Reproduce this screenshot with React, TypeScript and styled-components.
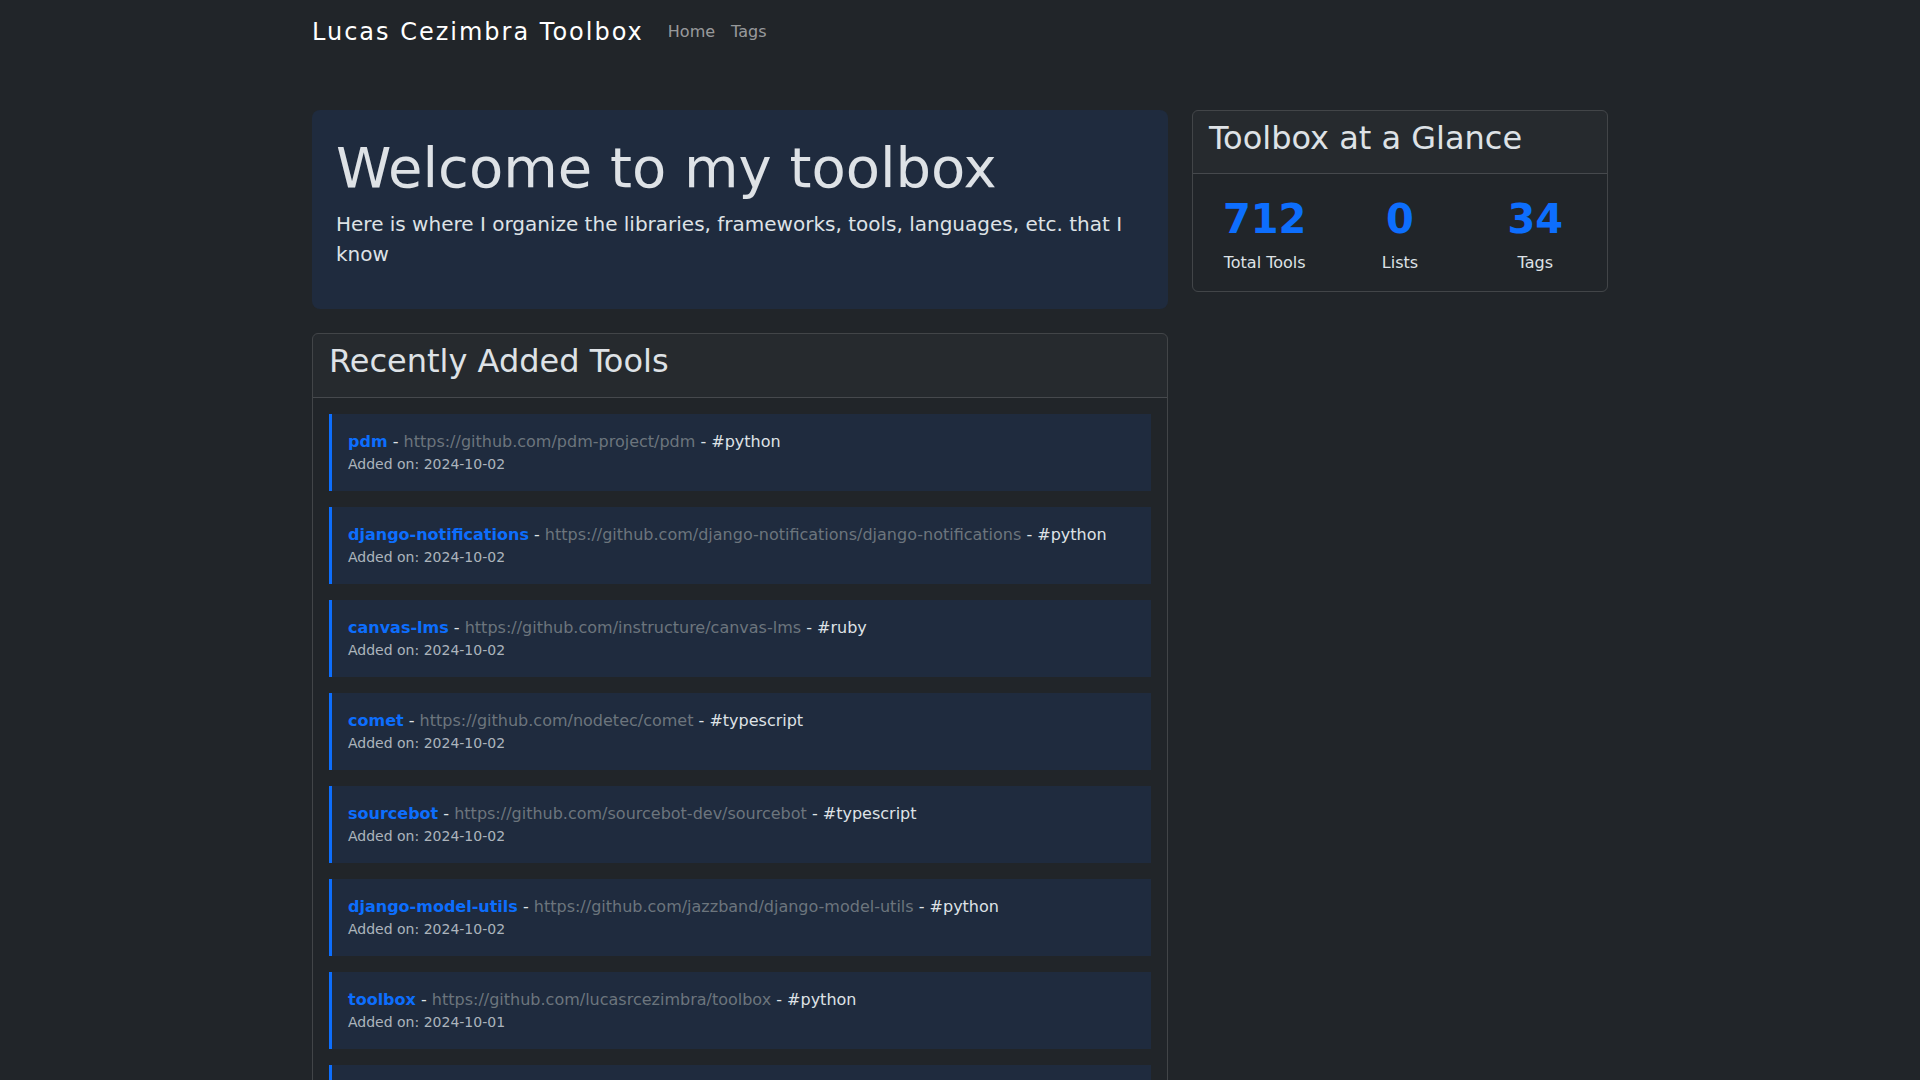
import React from "react";
import styled, { createGlobalStyle } from "styled-components";

const GlobalStyle = createGlobalStyle`
  html, body {
    margin: 0;
    padding: 0;
    background: #212529;
    color: #dee2e6;
    font-family: "DejaVu Sans", sans-serif;
    font-size: 16px;
    line-height: 1.5;
  }
  * { box-sizing: border-box; }
`;

const Container = styled.div`
  max-width: 1320px;
  margin: 0 auto;
  padding: 0 12px;
`;

const Navbar = styled.nav`
  padding: 9px 0 7px;
`;

const NavInner = styled(Container)`
  display: flex;
  align-items: center;
`;

const Brand = styled.a`
  color: #fff;
  font-size: 24px;
  line-height: 36px;
  letter-spacing: 2px;
  padding: 5px 0;
  margin-right: 16px;
  text-decoration: none;
`;

const NavLinks = styled.div`
  display: flex;
`;

const NavLink = styled.a`
  color: rgba(255, 255, 255, 0.55);
  padding: 8px;
  text-decoration: none;
  font-size: 16px;
`;

const Main = styled(Container)`
  margin-top: 48px;
  display: grid;
  grid-template-columns: 856fr 416fr;
  column-gap: 24px;
  align-items: start;
`;

const Column = styled.div`
  display: flex;
  flex-direction: column;
  gap: 24px;
  min-width: 0;
`;

const Hero = styled.section`
  background: #1f2b3e;
  border-radius: 8px;
  padding: 24px;
`;

const HeroTitle = styled.h1`
  font-size: 56px;
  font-weight: 400;
  line-height: 1.2;
  margin: 0 0 8px;
  color: #dee2e6;
`;

const Lead = styled.p`
  font-size: 20px;
  font-weight: 400;
  line-height: 1.5;
  margin: 0 0 16px;
`;

const Card = styled.section`
  border: 1px solid rgba(255, 255, 255, 0.15);
  border-radius: 6px;
  overflow: hidden;
`;

const CardHeader = styled.header`
  background: rgba(222, 226, 230, 0.03);
  border-bottom: 1px solid rgba(255, 255, 255, 0.15);
  padding: 8px 16px;
`;

const CardTitle = styled.h2`
  font-size: 32px;
  font-weight: 500;
  line-height: 1.2;
  margin: 0 0 8px;
  color: #dee2e6;
`;

const CardBody = styled.div`
  padding: 16px;
`;

const StatsRow = styled.div`
  display: grid;
  grid-template-columns: repeat(3, 1fr);
  margin: 0 -12px;
`;

const Stat = styled.div`
  text-align: center;
  padding: 0 12px;
`;

const StatNumber = styled.div`
  font-size: 40px;
  font-weight: 700;
  line-height: 58px;
  margin-bottom: 3px;
  color: #0d6efd;
`;

const StatLabel = styled.p`
  margin: 0;
`;

const ToolList = styled.div`
  display: flex;
  flex-direction: column;
  gap: 16px;
`;

const ToolItem = styled.div`
  background: #1f2b3e;
  border-left: 3px solid #0d6efd;
  padding: 16px;
`;

const ToolLine = styled.div`
  line-height: 24px;
`;

const ToolName = styled.a`
  color: #0d6efd;
  font-weight: 700;
  text-decoration: none;
`;

const ToolUrl = styled.a`
  color: #6c757d;
  text-decoration: none;
`;

const ToolTag = styled.span`
  color: #dee2e6;
`;

const ToolDate = styled.div`
  font-size: 14px;
  line-height: 21px;
  color: rgba(222, 226, 230, 0.75);
`;

const tools = [
  { name: "pdm", url: "https://github.com/pdm-project/pdm", tag: "python", date: "2024-10-02" },
  { name: "django-notifications", url: "https://github.com/django-notifications/django-notifications", tag: "python", date: "2024-10-02" },
  { name: "canvas-lms", url: "https://github.com/instructure/canvas-lms", tag: "ruby", date: "2024-10-02" },
  { name: "comet", url: "https://github.com/nodetec/comet", tag: "typescript", date: "2024-10-02" },
  { name: "sourcebot", url: "https://github.com/sourcebot-dev/sourcebot", tag: "typescript", date: "2024-10-02" },
  { name: "django-model-utils", url: "https://github.com/jazzband/django-model-utils", tag: "python", date: "2024-10-02" },
  { name: "toolbox", url: "https://github.com/lucasrcezimbra/toolbox", tag: "python", date: "2024-10-01" },
  { name: "ruff", url: "https://github.com/astral-sh/ruff", tag: "python", date: "2024-10-01" },
  { name: "htmx", url: "https://github.com/bigskysoftware/htmx", tag: "javascript", date: "2024-10-01" },
  { name: "uv", url: "https://github.com/astral-sh/uv", tag: "python", date: "2024-10-01" },
];

const stats = [
  { value: "712", label: "Total Tools" },
  { value: "0", label: "Lists" },
  { value: "34", label: "Tags" },
];

export default function App() {
  return (
    <>
      <GlobalStyle />
      <Navbar>
        <NavInner>
          <Brand href="#">Lucas Cezimbra Toolbox</Brand>
          <NavLinks>
            <NavLink href="#">Home</NavLink>
            <NavLink href="#">Tags</NavLink>
          </NavLinks>
        </NavInner>
      </Navbar>
      <Main>
        <Column>
          <Hero>
            <HeroTitle>Welcome to my toolbox</HeroTitle>
            <Lead>Here is where I organize the libraries, frameworks, tools, languages, etc. that I know</Lead>
          </Hero>
          <Card>
            <CardHeader>
              <CardTitle>Recently Added Tools</CardTitle>
            </CardHeader>
            <CardBody>
              <ToolList>
                {tools.map((t) => (
                  <ToolItem key={t.name}>
                    <ToolLine>
                      <ToolName href="#">{t.name}</ToolName> - <ToolUrl href="#">{t.url}</ToolUrl> - <ToolTag>#{t.tag}</ToolTag>
                    </ToolLine>
                    <ToolDate>Added on: {t.date}</ToolDate>
                  </ToolItem>
                ))}
              </ToolList>
            </CardBody>
          </Card>
        </Column>
        <Column>
          <Card>
            <CardHeader>
              <CardTitle>Toolbox at a Glance</CardTitle>
            </CardHeader>
            <CardBody>
              <StatsRow>
                {stats.map((s) => (
                  <Stat key={s.label}>
                    <StatNumber>{s.value}</StatNumber>
                    <StatLabel>{s.label}</StatLabel>
                  </Stat>
                ))}
              </StatsRow>
            </CardBody>
          </Card>
        </Column>
      </Main>
    </>
  );
}
